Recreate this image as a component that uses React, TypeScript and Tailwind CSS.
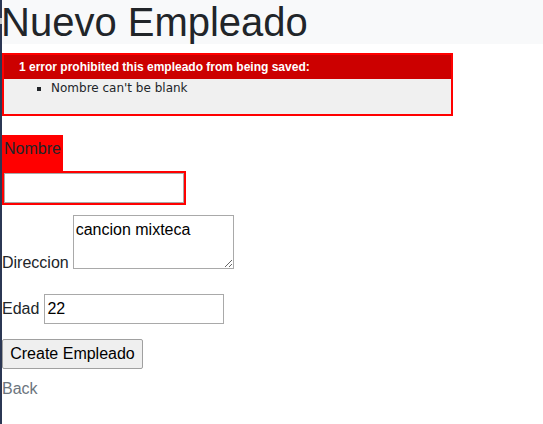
import React from "react"

export default function App() {
  return (
    <div className="flex min-h-screen bg-white text-[#212529]" style={{ fontFamily: '"Liberation Sans", Arial, sans-serif' }}>
      {/* left window edge */}
      <div className="flex w-[2px] shrink-0 flex-col bg-[#2b3754]">
        <div className="h-[18px]" />
        <div className="h-[6px] bg-[#c9c9c9]" />
      </div>

      <div className="flex-1">
        <header className="h-[44px] bg-[#f8f9fa]">
          <h1 className="-ml-px text-[40px] leading-[44px] font-normal">Nuevo Empleado</h1>
        </header>

        <div className="mt-[9px] w-[451px] border-2 border-[#ff0000] bg-[#f0f0f0]">
          <h2 className="bg-[#cc0000] py-[5px] pl-[15px] text-[12px] leading-[14px] font-bold text-white">
            1 error prohibited this empleado from being saved:
          </h2>
          <ul className="mb-[17px] ml-[7px] list-[square] pl-[40px]">
            <li className="font-['DejaVu_Sans',Verdana,sans-serif] text-[12px] leading-[18px]">Nombre can't be blank</li>
          </ul>
        </div>

        <form className="mt-[19px]">
          <div className="flex flex-col items-start">
            <div className="bg-[#ff0000] p-[2px]">
              <label className="mb-[8px] block text-[16px] leading-[24px]">Nombre</label>
            </div>
            <div className="bg-[#ff0000] p-[2px]">
              <input type="text" className="block h-[30px] w-[180px] border border-[#a9a9a9] bg-white px-[2px] text-[16px]" />
            </div>
          </div>

          <div className="mt-[10px] flex items-end">
            <label className="text-[16px] leading-[12px]">Direccion</label>
            <textarea
              defaultValue="cancion mixteca"
              className="ml-[4px] block h-[54px] w-[161px] border border-[#a9a9a9] bg-white px-[2px] py-[2px] text-[16px] leading-[24px] text-black"
            />
          </div>

          <div className="mt-[25px] flex items-center">
            <label className="text-[16px] leading-[24px]">Edad</label>
            <input
              type="number"
              defaultValue="22"
              className="ml-[5px] block h-[30px] w-[180px] border border-[#a9a9a9] bg-white px-[2px] text-[16px] text-black"
            />
          </div>

          <div className="mt-[15px]">
            <button type="button" className="h-[30px] w-[141px] rounded-[2px] border border-[#a0a0a0] bg-[#efefef] text-[16px] text-black">
              Create Empleado
            </button>
          </div>
        </form>

        <a href="#" className="mt-[8px] block text-[16px] leading-[24px] text-[#6c757d]">
          Back
        </a>
      </div>
    </div>
  )
}
